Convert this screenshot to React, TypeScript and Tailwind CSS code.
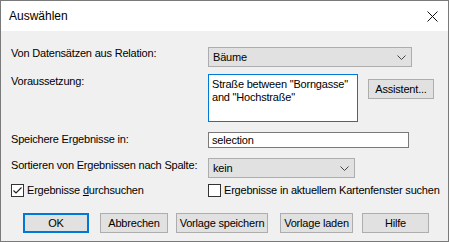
function Chevron() {
  return (
    <svg width="9" height="5" viewBox="0 0 9 5" className="shrink-0">
      <path d="M0.5 0.5 L4.5 4.5 L8.5 0.5" fill="none" stroke="#444" strokeWidth="1" />
    </svg>
  );
}

function Combo({ value, width }: { value: string; width: string }) {
  return (
    <div className={`${width} h-[20px] flex items-center justify-between bg-[#e1e1e1] border border-[#adadad] pl-[4px] pr-[5px]`}>
      <span className="pt-[1px]">{value}</span>
      <Chevron />
    </div>
  );
}

function CheckBox({ checked }: { checked?: boolean }) {
  return (
    <div className="w-[13px] h-[13px] border border-[#333] bg-white flex items-center justify-center shrink-0">
      {checked && (
        <svg width="11" height="11" viewBox="0 0 11 11">
          <path d="M1.5 5.5 L4 8 L9.5 2.5" fill="none" stroke="#222" strokeWidth="1.2" />
        </svg>
      )}
    </div>
  );
}

function Button({ label, width, className = "" }: { label: string; width: string; className?: string }) {
  return (
    <div className={`${width} h-[20px] flex items-center justify-center bg-[#e1e1e1] border border-[#adadad] ${className}`}>
      {label}
    </div>
  );
}

export default function App() {
  return (
    <div className="w-[449px] h-[242px] border border-[#7a7a7a] bg-[#f0f0f0] flex flex-col font-['Liberation_Sans',Arial,sans-serif] text-[11px] leading-[13px] tracking-[-0.2px] text-black whitespace-nowrap overflow-hidden">
      <div className="h-[30px] shrink-0 bg-white flex items-center justify-between pl-[8px] pr-[10px]">
        <span className="text-[12px] tracking-normal">Auswählen</span>
        <svg width="11" height="11" viewBox="0 0 11 11">
          <path d="M0.5 0.5 L10.5 10.5 M10.5 0.5 L0.5 10.5" stroke="#111" strokeWidth="1" />
        </svg>
      </div>

      <div className="flex flex-col pl-[10px] pt-[16px]">
        <div className="flex items-start">
          <span className="w-[197px]">Von Datensätzen aus Relation:</span>
          <Combo value="Bäume" width="w-[204px]" />
        </div>

        <div className="flex items-start mt-[7px]">
          <span className="w-[197px] pt-[1px]">Voraussetzung:</span>
          <div className="w-[150px] h-[48px] bg-white border border-[#0078d7] px-[3px] pt-[3px]">
            Straße between "Borngasse"
            <br />
            and "Hochstraße"
          </div>
          <Button label="Assistent..." width="w-[66px]" className="ml-[10px] mt-[5px]" />
        </div>

        <div className="flex items-start mt-[10px]">
          <span className="w-[197px] pt-[1px]">Speichere Ergebnisse in:</span>
          <div className="w-[201px] h-[16px] bg-white border border-[#7a7a7a] pl-[3px] flex items-center">
            selection
          </div>
        </div>

        <div className="flex items-start mt-[10px]">
          <span className="w-[197px] pt-[1px]">Sortieren von Ergebnissen nach Spalte:</span>
          <Combo value="kein" width="w-[147px]" />
        </div>

        <div className="flex items-center mt-[6px] h-[13px]">
          <div className="w-[197px] flex items-center">
            <CheckBox checked />
            <span className="ml-[3px]">
              Ergebnisse <span className="underline">d</span>urchsuchen
            </span>
          </div>
          <div className="flex items-center">
            <CheckBox />
            <span className="ml-[3px]">Ergebnisse in aktuellem Kartenfenster suchen</span>
          </div>
        </div>

        <div className="flex items-center mt-[16px]">
          <div className="ml-[12px] w-[66px] h-[20px] flex items-center justify-center bg-[#e1e1e1] border-2 border-[#0078d7]">
            OK
          </div>
          <Button label="Abbrechen" width="w-[68px]" className="ml-[11px]" />
          <Button label="Vorlage speichern" width="w-[92px]" className="ml-[8px]" />
          <Button label="Vorlage laden" width="w-[73px]" className="ml-[12px]" />
          <Button label="Hilfe" width="w-[67px]" className="ml-[9px]" />
        </div>
      </div>
    </div>
  );
}
